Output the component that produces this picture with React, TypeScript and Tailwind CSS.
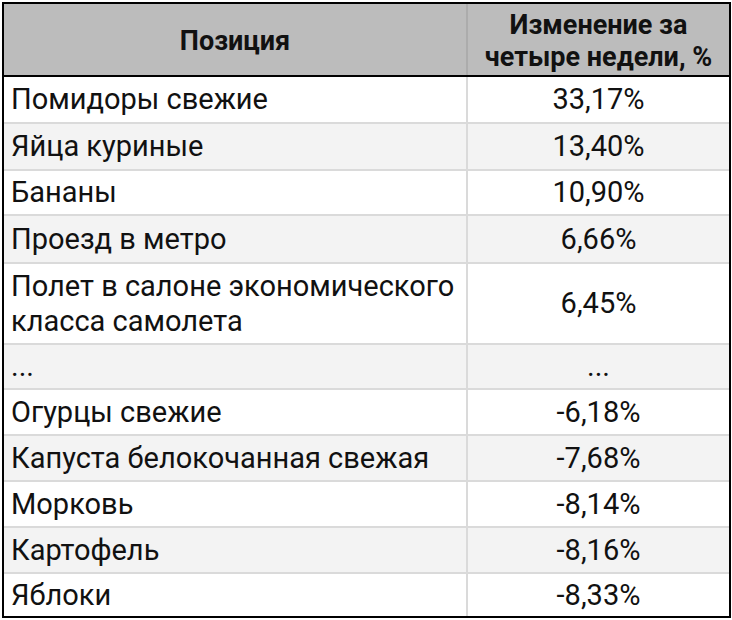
import React from "react";

const rows: { name: React.ReactNode; value: string; h: string; bg: string; top: boolean }[] = [
  { name: "Помидоры свежие", value: "33,17%", h: "h-[45px]", bg: "bg-white", top: false },
  { name: "Яйца куриные", value: "13,40%", h: "h-[47px]", bg: "bg-[#f3f3f3]", top: true },
  { name: "Бананы", value: "10,90%", h: "h-[45px]", bg: "bg-white", top: true },
  { name: "Проезд в метро", value: "6,66%", h: "h-[48px]", bg: "bg-[#f3f3f3]", top: true },
  {
    name: (
      <>
        Полет в салоне экономического
        <br />
        класса самолета
      </>
    ),
    value: "6,45%",
    h: "h-[81px]",
    bg: "bg-white",
    top: true,
  },
  { name: "...", value: "...", h: "h-[45px]", bg: "bg-[#f3f3f3]", top: true },
  { name: "Огурцы свежие", value: "-6,18%", h: "h-[46px]", bg: "bg-white", top: true },
  { name: "Капуста белокочанная свежая", value: "-7,68%", h: "h-[46px]", bg: "bg-[#f3f3f3]", top: true },
  { name: "Морковь", value: "-8,14%", h: "h-[46px]", bg: "bg-white", top: true },
  { name: "Картофель", value: "-8,16%", h: "h-[46px]", bg: "bg-[#f3f3f3]", top: true },
  { name: "Яблоки", value: "-8,33%", h: "h-[44px]", bg: "bg-white", top: true },
];

export default function App() {
  return (
    <div className="w-[732px] h-[620px] bg-white pl-[2px] pt-[2px] text-[#111] font-['Roboto',sans-serif]">
      <div className="w-[729px] border-2 border-black flex flex-col">
        <div className="flex h-[73px] bg-[#bcbcbc] border-b-2 border-black">
          <div className="w-[464px] shrink-0 border-r-2 border-[#acacac] flex items-center justify-center pt-[3px] text-[27px] font-bold">
            Позиция
          </div>
          <div className="flex-1 flex items-center justify-center pt-[3px] text-center text-[27px] font-bold leading-[32px]">
            Изменение за
            <br />
            четыре недели, %
          </div>
        </div>
        {rows.map((r, i) => (
          <div
            key={i}
            className={`flex ${r.h} ${r.bg} ${r.top ? "border-t-2 border-[#dadada]" : ""} text-[29px] leading-[35px]`}
          >
            <div className="w-[464px] shrink-0 border-r-2 border-[#dadada] flex items-center pl-[7px]">
              <span>{r.name}</span>
            </div>
            <div className="flex-1 flex items-center justify-center">{r.value}</div>
          </div>
        ))}
      </div>
    </div>
  );
}
